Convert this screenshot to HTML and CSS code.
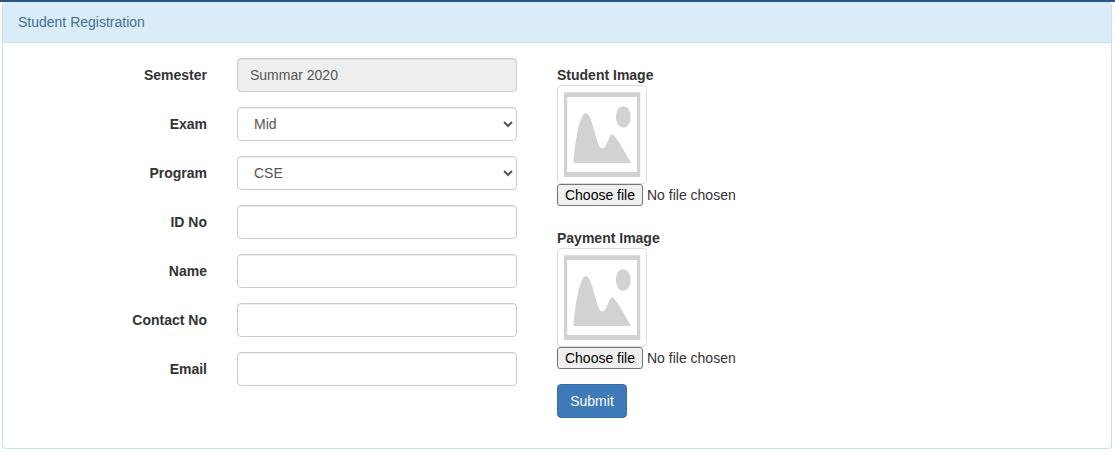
FILE: index.html
```html
<!DOCTYPE html>
<html lang="en">
<head>
<meta charset="utf-8">
<title>Student Registration</title>
<link rel="stylesheet" href="styles.css">
</head>
<body>
<svg class="defs" width="0" height="0" aria-hidden="true">
  <symbol id="placeholder" viewBox="0 0 88 97">
    <path fill="#d2d2d2" fill-rule="evenodd" d="M6 6.300h76.300v84.700H6zM9.200 11v75h69.800V11z"/>
    <ellipse cx="65.300" cy="31" rx="7.400" ry="10.800" fill="#d2d2d2"/>
    <path fill="#d2d2d2" d="M15.500 77C17 55 22 27 27.700 27C35 27 38 62.500 44.300 62.500C49 62.500 51 48.500 53.800 48.500C57 48.500 64 61 73.200 77z"/>
  </symbol>
</svg>
<div class="topbar"></div>
<main class="panel">
  <div class="panel-heading">Student Registration</div>
  <form class="panel-body">
    <div class="fields">
      <label for="semester">Semester</label>
      <input class="control" id="semester" type="text" value="Summar 2020" readonly>
      <label for="exam">Exam</label>
      <select class="control" id="exam"><option>Mid</option></select>
      <label for="program">Program</label>
      <select class="control" id="program"><option>CSE</option></select>
      <label for="idno">ID No</label>
      <input class="control" id="idno" type="text">
      <label for="name">Name</label>
      <input class="control" id="name" type="text">
      <label for="contact">Contact No</label>
      <input class="control" id="contact" type="text">
      <label for="email">Email</label>
      <input class="control" id="email" type="text">
    </div>
    <div class="uploads">
      <div class="upload">
        <div class="upload-title">Student Image</div>
        <svg class="thumbnail"><use href="#placeholder"/></svg>
        <div class="file"><button type="button" class="file-button">Choose file</button><span>No file chosen</span></div>
      </div>
      <div class="upload">
        <div class="upload-title">Payment Image</div>
        <svg class="thumbnail"><use href="#placeholder"/></svg>
        <div class="file"><button type="button" class="file-button">Choose file</button><span>No file chosen</span></div>
      </div>
      <button type="button" class="submit">Submit</button>
    </div>
  </form>
</main>
</body>
</html>
```

FILE: styles.css
```css
* {
  box-sizing: border-box;
}

body {
  margin: 0;
  background: #fff;
  color: #333;
  font: 14px/20px "Liberation Sans", Arial, sans-serif;
}

.defs {
  display: none;
}

.topbar {
  height: 2px;
  background: #2b5488;
}

.panel {
  height: 447px;
  margin: 0 3px 0 2px;
  border: 1px solid #bee6f1;
  border-top: 0;
  border-radius: 4px;
  box-shadow: 0 1px 1px rgba(0, 0, 0, .05);
}

.panel-heading {
  padding: 10px 15px;
  border-bottom: 1px solid #bee6f1;
  border-radius: 3px 3px 0 0;
  background: #daecf8;
  color: #427093;
}

.panel-body {
  display: flex;
  gap: 40px;
  padding: 15px 0 0 15px;
}

.fields {
  display: grid;
  grid-template-columns: 189px 280px;
  grid-auto-rows: 34px;
  gap: 15px 30px;
  align-content: start;
  text-align: right;
  font-weight: 700;
}

.fields label {
  padding-top: 7px;
}

.control {
  width: 280px;
  height: 34px;
  padding: 6px 12px;
  border: 1px solid #ccc;
  border-radius: 4px;
  background: #fff;
  box-shadow: inset 0 1px 1px rgba(0, 0, 0, .075);
  color: #555;
  font: 14px/20px "Liberation Sans", Arial, sans-serif;
}

.control[readonly] {
  background: #eee;
}

.uploads {
  padding-top: 7px;
}

.upload {
  height: 141px;
  margin-bottom: 22px;
}

.upload + .upload {
  margin-bottom: 15px;
}

.upload-title {
  font-weight: 700;
}

.thumbnail {
  display: block;
  width: 90px;
  height: 99px;
  border: 1px solid #ddd;
  border-radius: 4px;
}

.file {
  display: flex;
  gap: 4px;
  line-height: 22px;
}

.file-button {
  width: 86px;
  height: 22px;
  padding: 0;
  border: 1px solid #767676;
  border-radius: 3px;
  background: #efefef;
  color: #000;
  font: 14px/20px "Liberation Sans", Arial, sans-serif;
}

.submit {
  width: 70px;
  height: 34px;
  padding: 0;
  border: 1px solid #376ca5;
  border-radius: 4px;
  background: #3e79b8;
  color: #fff;
  font: 14px/20px "Liberation Sans", Arial, sans-serif;
}
```
